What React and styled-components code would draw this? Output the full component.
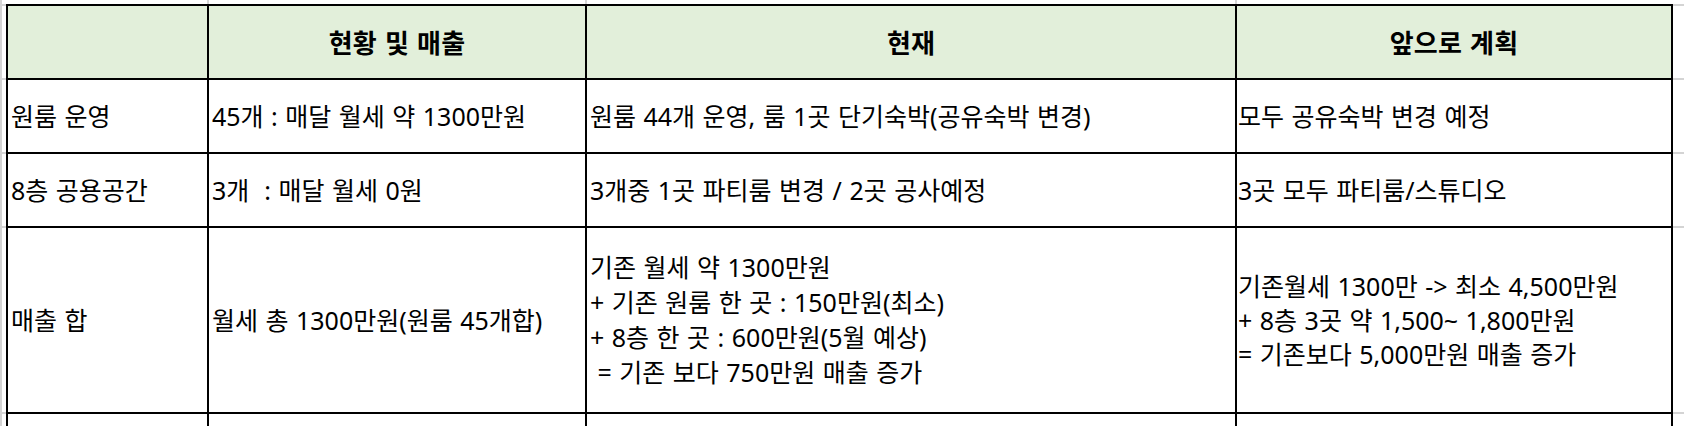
import React from "react";
import styled, { createGlobalStyle } from "styled-components";

const GlobalStyle = createGlobalStyle`
  html, body {
    margin: 0;
    padding: 0;
    background: #fff;
    overflow: hidden;
  }
  body {
    font-family: "Noto Sans", "Noto Sans CJK KR", sans-serif;
    color: #000;
  }
`;

// spreadsheet grid lines peeking out behind the bordered table
const gridX = [0, 207, 585, 1235];
const gridY = [4, 78, 152, 226, 412];

const Sheet = styled.div`
  width: 1684px;
  height: 426px;
  overflow: hidden;
  padding: 4px 0 0 6px;
  box-sizing: border-box;
  background-color: #fff;
  background-repeat: no-repeat;
  background-image: ${[...gridX, ...gridY]
    .map(() => "linear-gradient(#d4d4d4, #d4d4d4)")
    .join(", ")};
  background-size: ${[
    ...gridX.map(() => "2px 100%"),
    ...gridY.map(() => "100% 2px"),
  ].join(", ")};
  background-position: ${[
    ...gridX.map((x) => `${x}px 0`),
    ...gridY.map((y) => `0 ${y}px`),
  ].join(", ")};
`;

const Table = styled.table`
  border-collapse: collapse;
  table-layout: fixed;
  width: 1667px;
  background: #fff;
  font-size: 25px;
  word-spacing: 1px;
`;

const HeadCell = styled.th`
  height: 72px;
  padding: 0;
  border: 2px solid #000;
  background: #e2efda;
  font-size: 26px;
  font-weight: 700;
  letter-spacing: 0.2px;
  text-align: center;
  vertical-align: middle;
`;

const Cell = styled.td`
  height: ${(p) => p.$h || 72}px;
  padding: 0 0 0 ${(p) => p.$pad ?? 3}px;
  border: 2px solid #000;
  text-align: left;
  vertical-align: middle;
  white-space: pre;
  line-height: 1.3;
`;

const Lines = styled.div`
  line-height: ${(p) => p.$lh}px;
  white-space: pre;
`;

const rows = [
  ["원룸 운영", "45개 : 매달 월세 약 1300만원", "원룸 44개 운영, 룸 1곳 단기숙박(공유숙박 변경)", "모두 공유숙박 변경 예정"],
  ["8층 공용공간", "3개  : 매달 월세 0원", "3개중 1곳 파티룸 변경 / 2곳 공사예정", "3곳 모두 파티룸/스튜디오"],
];

export default function App() {
  return (
    <>
      <GlobalStyle />
      <Sheet>
        <Table>
          <colgroup>
            <col style={{ width: 201 }} />
            <col style={{ width: 378 }} />
            <col style={{ width: 650 }} />
            <col style={{ width: 436 }} />
          </colgroup>
          <thead>
            <tr>
              <HeadCell></HeadCell>
              <HeadCell>현황 및 매출</HeadCell>
              <HeadCell>현재</HeadCell>
              <HeadCell>앞으로 계획</HeadCell>
            </tr>
          </thead>
          <tbody>
            {rows.map((r) => (
              <tr key={r[0]}>
                {r.map((c, i) => (
                  <Cell key={i} $pad={i === 3 ? 1 : 3}>
                    {c}
                  </Cell>
                ))}
              </tr>
            ))}
            <tr>
              <Cell $h={184}>매출 합</Cell>
              <Cell $h={184}>월세 총 1300만원(원룸 45개합)</Cell>
              <Cell $h={184}>
                <Lines $lh={35}>
                  {"기존 월세 약 1300만원\n+ 기존 원룸 한 곳 : 150만원(최소)\n+ 8층 한 곳 : 600만원(5월 예상)\n = 기존 보다 750만원 매출 증가"}
                </Lines>
              </Cell>
              <Cell $h={184} $pad={1}>
                <Lines $lh={34}>
                  {"기존월세 1300만 -> 최소 4,500만원\n+ 8층 3곳 약 1,500~ 1,800만원\n= 기존보다 5,000만원 매출 증가"}
                </Lines>
              </Cell>
            </tr>
            <tr>
              <Cell $h={72} />
              <Cell $h={72} />
              <Cell $h={72} />
              <Cell $h={72} />
            </tr>
          </tbody>
        </Table>
      </Sheet>
    </>
  );
}
